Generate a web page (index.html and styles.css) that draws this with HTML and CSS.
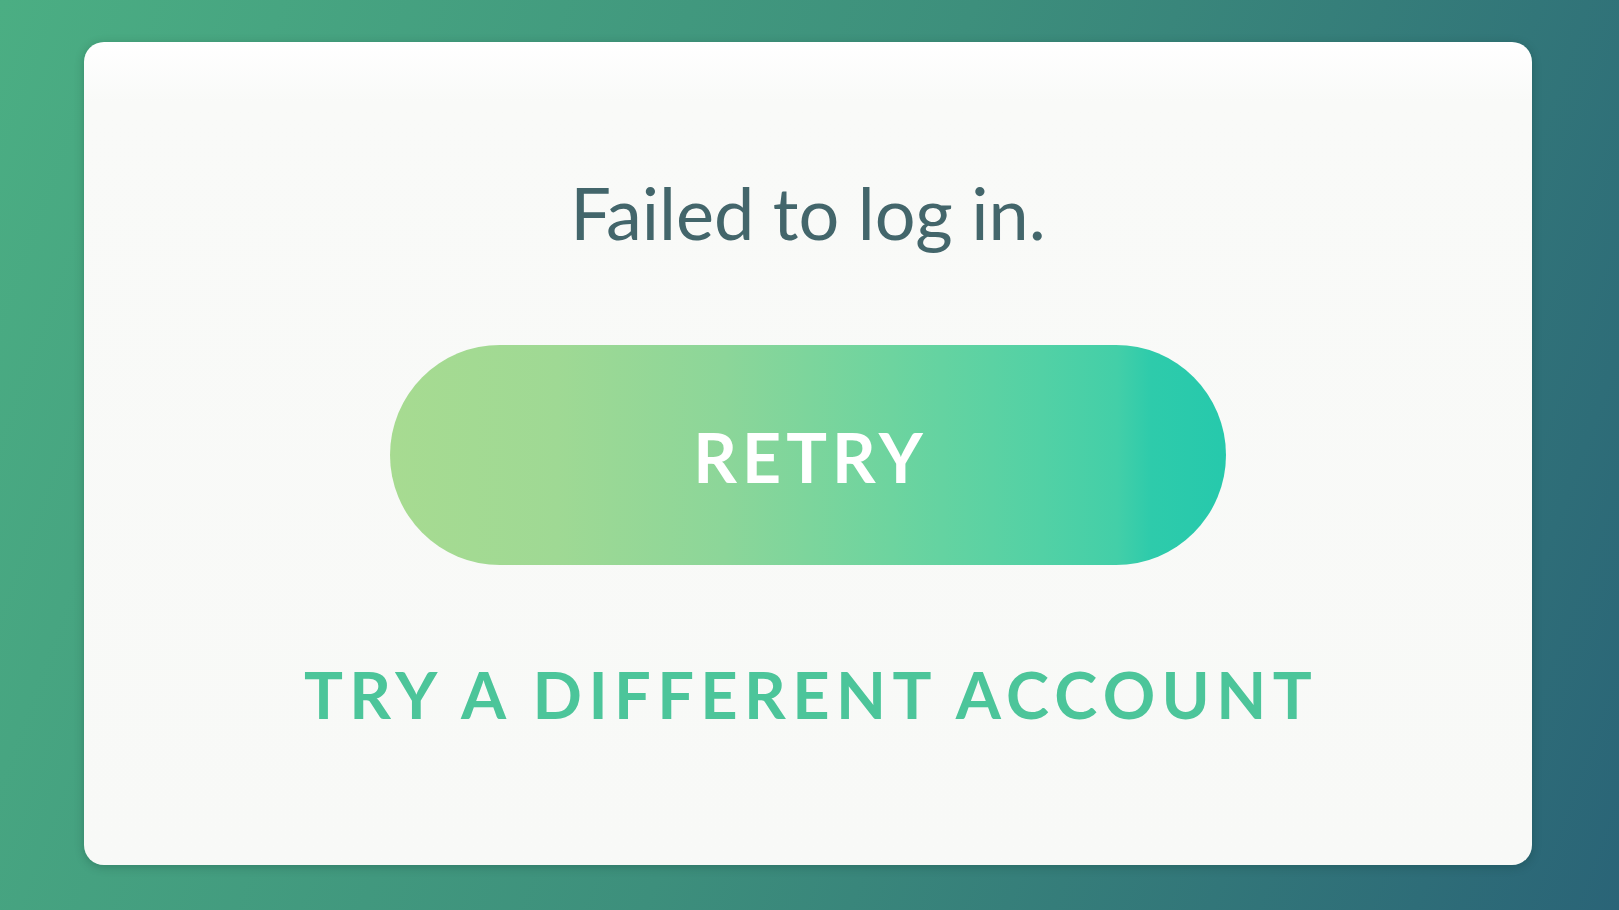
FILE: index.html
```html
<!DOCTYPE html>
<html lang="en">
<head>
<meta charset="utf-8">
<title>Failed to log in</title>
<link rel="stylesheet" href="styles.css">
</head>
<body>
  <main class="screen">
    <section class="card">
      <h1 class="title">Failed to log in.</h1>
      <button class="retry" type="button">RETRY</button>
      <button class="alt" type="button">TRY A DIFFERENT ACCOUNT</button>
    </section>
  </main>
</body>
</html>
```

FILE: styles.css
```css
* { box-sizing: border-box; }

html, body {
  margin: 0;
  width: 1619px;
  height: 910px;
  overflow: hidden;
}

body {
  font-family: Lato, "Open Sans", "Liberation Sans", sans-serif;
  background: linear-gradient(110deg, #4bae83 0%, #3d8f7c 50%, #2a6477 100%);
}

.screen {
  height: 910px;
  padding: 42px 87px 45px 84px;
}

.card {
  height: 823px;
  border-radius: 20px;
  background: linear-gradient(180deg, #ffffff 0px, #f9faf8 60px, #f8f9f7 100%);
  box-shadow: 0 2px 10px rgba(0, 40, 30, 0.25);
  display: flex;
  flex-direction: column;
  align-items: center;
  padding-top: 134px;
}

.title {
  margin: 0;
  font-size: 72px;
  line-height: 72px;
  font-weight: 400;
  color: #43666b;
}

.retry {
  margin-top: 97px;
  width: 836px;
  height: 220px;
  border: none;
  border-radius: 110px;
  padding: 3px 0 0 5px;
  background: linear-gradient(90deg, #a7db91 0%, #9fd994 20%, #8cd699 40%, #6dd49f 60%, #52d1a5 78%, #43cfa8 87%, #2ecbab 91%, #26c9ac 100%);
  color: #ffffff;
  font-family: Lato, "Open Sans", "Liberation Sans", sans-serif;
  font-weight: 700;
  font-size: 68px;
  line-height: 68px;
  letter-spacing: 0.075em;
}

.alt {
  margin-top: 97px;
  border: none;
  background: none;
  padding: 0 0 0 6px;
  color: #4cc59a;
  font-family: Lato, "Open Sans", "Liberation Sans", sans-serif;
  font-weight: 700;
  font-size: 65px;
  line-height: 65px;
  letter-spacing: 0.098em;
}
```
